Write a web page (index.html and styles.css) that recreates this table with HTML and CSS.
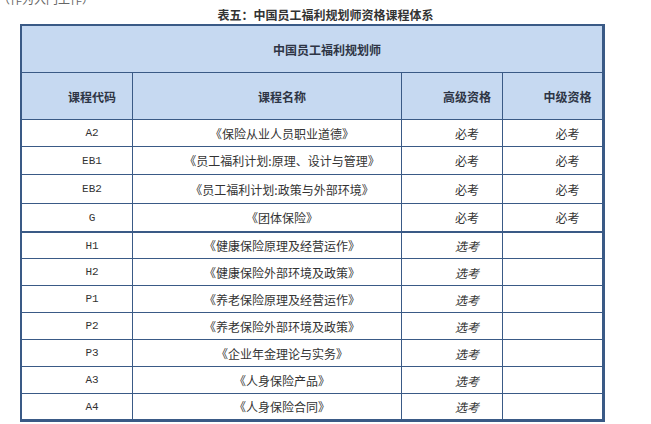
FILE: index.html
```html
<!DOCTYPE html>
<html lang="zh-CN">
<head>
<meta charset="utf-8">
<title>中国员工福利规划师资格课程体系</title>
<link rel="stylesheet" href="styles.css">
</head>
<body>
<div class="clip"><p class="clip-text">（作为入门工作）</p></div>
<h2 class="title">表五：中国员工福利规划师资格课程体系</h2>
<div class="tbl">
  <div class="cell head span4">中国员工福利规划师</div>

  <div class="cell head">课程代码</div>
  <div class="cell head">课程名称</div>
  <div class="cell head">高级资格</div>
  <div class="cell head last">中级资格</div>

  <div class="cell code">A2</div>
  <div class="cell">《保险从业人员职业道德》</div>
  <div class="cell">必考</div>
  <div class="cell last">必考</div>

  <div class="cell code">EB1</div>
  <div class="cell">《员工福利计划:原理、设计与管理》</div>
  <div class="cell">必考</div>
  <div class="cell last">必考</div>

  <div class="cell code">EB2</div>
  <div class="cell">《员工福利计划:政策与外部环境》</div>
  <div class="cell">必考</div>
  <div class="cell last">必考</div>

  <div class="cell code thick">G</div>
  <div class="cell thick">《团体保险》</div>
  <div class="cell thick">必考</div>
  <div class="cell last thick">必考</div>

  <div class="cell code">H1</div>
  <div class="cell">《健康保险原理及经营运作》</div>
  <div class="cell opt">选考</div>
  <div class="cell last"></div>

  <div class="cell code">H2</div>
  <div class="cell">《健康保险外部环境及政策》</div>
  <div class="cell opt">选考</div>
  <div class="cell last"></div>

  <div class="cell code">P1</div>
  <div class="cell">《养老保险原理及经营运作》</div>
  <div class="cell opt">选考</div>
  <div class="cell last"></div>

  <div class="cell code">P2</div>
  <div class="cell">《养老保险外部环境及政策》</div>
  <div class="cell opt">选考</div>
  <div class="cell last"></div>

  <div class="cell code">P3</div>
  <div class="cell">《企业年金理论与实务》</div>
  <div class="cell opt">选考</div>
  <div class="cell last"></div>

  <div class="cell code">A3</div>
  <div class="cell">《人身保险产品》</div>
  <div class="cell opt">选考</div>
  <div class="cell last"></div>

  <div class="cell code bottom">A4</div>
  <div class="cell bottom">《人身保险合同》</div>
  <div class="cell opt bottom">选考</div>
  <div class="cell last bottom"></div>
</div>
</body>
</html>
```

FILE: styles.css
```css
html, body {
  margin: 0;
  padding: 0;
  background: #ffffff;
}

body {
  font-family: "Noto Sans CJK SC", "Noto Sans", sans-serif;
  font-size: 12px;
  color: #333333;
}

.clip {
  height: 6px;
  overflow: hidden;
}

.clip-text {
  margin: -8px 0 0 -2px;
  line-height: 14px;
  font-size: 12px;
  color: #666666;
}

.title {
  margin: 0;
  height: 18px;
  line-height: 18px;
  font-size: 12px;
  font-weight: bold;
  text-align: center;
  color: #333333;
}

.tbl {
  display: grid;
  grid-template-columns: 111px 269px 101px 99px;
  grid-template-rows: 47px 47px 27px 28px 29px 29px 26px 27px 27px 27px 27px 27px 25px;
  width: max-content;
  margin-left: 20px;
  border: 2px solid #3a5a86;
  border-right-width: 3px;
  border-bottom-width: 3px;
}

.cell {
  box-sizing: border-box;
  display: flex;
  align-items: center;
  justify-content: center;
  padding-left: 30px;
  border-right: 1px solid #3a5a86;
  border-bottom: 1px solid #3a5a86;
  white-space: nowrap;
  color: #333333;
}

.cell.last {
  border-right: none;
}

.cell.thick {
  border-bottom-width: 2px;
}

.cell.bottom {
  border-bottom: none;
}

.head {
  background: #c6d9f1;
  font-weight: bold;
  color: #2e3545;
}

.span4 {
  grid-column: 1 / span 4;
  border-right: none;
}

.code {
  font-family: "Liberation Mono", monospace;
  font-size: 11px;
}

.opt {
  font-style: italic;
}
```
